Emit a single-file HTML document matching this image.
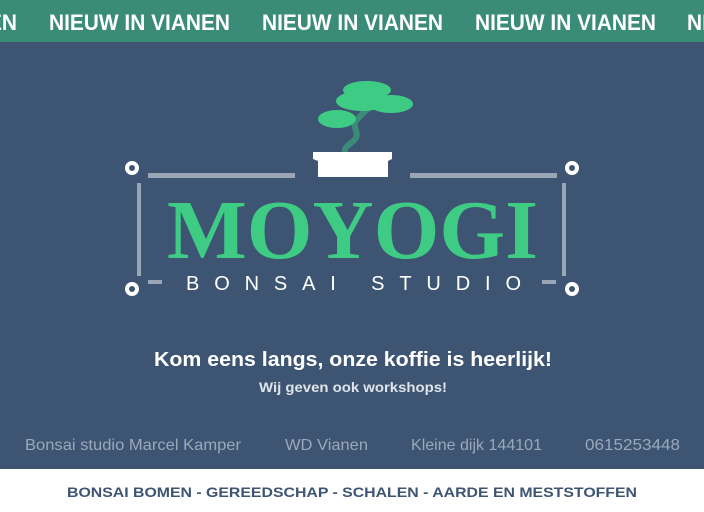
<!DOCTYPE html>
<html><head><meta charset="utf-8"><style>
html,body{margin:0;padding:0;width:704px;height:512px;overflow:hidden;background:#3d5573;font-family:"Liberation Sans",sans-serif}
svg{display:block}
</style></head><body>
<svg width="704" height="512" viewBox="0 0 704 512" xmlns="http://www.w3.org/2000/svg">
<rect x="0" y="0" width="704" height="512" fill="#3d5573"/>
<rect x="0" y="0" width="704" height="42" fill="#3a8c78"/>
<g fill="#fff" font-family="Liberation Sans, sans-serif" font-weight="bold" font-size="22">
<text x="-164" y="30" textLength="181" lengthAdjust="spacingAndGlyphs">NIEUW IN VIANEN</text>
<text x="49" y="30" textLength="181" lengthAdjust="spacingAndGlyphs">NIEUW IN VIANEN</text>
<text x="262" y="30" textLength="181" lengthAdjust="spacingAndGlyphs">NIEUW IN VIANEN</text>
<text x="475" y="30" textLength="181" lengthAdjust="spacingAndGlyphs">NIEUW IN VIANEN</text>
<text x="687" y="30" textLength="181" lengthAdjust="spacingAndGlyphs">NIEUW IN VIANEN</text>
</g>
<!-- tree -->
<path d="M345 153 C343 146 352 144 356 138 C359 132 352 127 356 121 C360 115 366 111 372 105" fill="none" stroke="#3a8c78" stroke-width="6" stroke-linecap="round"/>
<g fill="#3ecb84">
<ellipse cx="337" cy="119" rx="19" ry="9"/>
<ellipse cx="367" cy="90" rx="24" ry="9"/>
<ellipse cx="362" cy="101" rx="26" ry="10"/>
<ellipse cx="391" cy="104" rx="22" ry="9"/>
</g>
<path d="M313 152 L392 152 L392 159 L388 161 L388 177 L318 177 L318 161 L313 159 Z" fill="#fff"/>
<!-- frame -->
<g fill="#9aa6b6">
<rect x="148" y="173" width="147" height="5"/>
<rect x="410" y="173" width="147" height="5"/>
<rect x="137" y="183" width="4" height="93"/>
<rect x="562" y="183" width="4" height="93"/>
<rect x="148" y="280" width="14" height="4"/>
<rect x="542" y="280" width="14" height="4"/>
</g>
<g fill="none" stroke="#fff" stroke-width="4">
<circle cx="132" cy="168" r="5"/><circle cx="572" cy="168" r="5"/>
<circle cx="132" cy="289" r="5"/><circle cx="572" cy="289" r="5"/>
</g>
<text x="167" y="258" fill="#3ecb84" font-family="Liberation Serif, serif" font-weight="bold" font-size="84" textLength="371" lengthAdjust="spacingAndGlyphs">MOYOGI</text>
<text x="186" y="290" fill="#fff" font-family="Liberation Sans, sans-serif" font-size="20" textLength="335" lengthAdjust="spacing">BONSAI STUDIO</text>
<text x="154" y="366" fill="#fff" font-weight="bold" font-size="20" textLength="398" lengthAdjust="spacingAndGlyphs">Kom eens langs, onze koffie is heerlijk!</text>
<text x="259" y="392" fill="#dfe4ea" font-weight="bold" font-size="14" textLength="188" lengthAdjust="spacingAndGlyphs">Wij geven ook workshops!</text>
<g fill="#9aa8ba" font-size="16">
<text x="25" y="450" textLength="216" lengthAdjust="spacingAndGlyphs">Bonsai studio Marcel Kamper</text>
<text x="285" y="450" textLength="83" lengthAdjust="spacingAndGlyphs">WD Vianen</text>
<text x="411" y="450" textLength="131" lengthAdjust="spacingAndGlyphs">Kleine dijk 144101</text>
<text x="585" y="450" textLength="95" lengthAdjust="spacingAndGlyphs">0615253448</text>
</g>
<rect x="0" y="469" width="704" height="43" fill="#fff"/>
<text x="67" y="497" fill="#3d5573" font-weight="bold" font-size="14" textLength="570" lengthAdjust="spacingAndGlyphs">BONSAI BOMEN - GEREEDSCHAP - SCHALEN - AARDE EN MESTSTOFFEN</text>
</svg>
</body></html>
